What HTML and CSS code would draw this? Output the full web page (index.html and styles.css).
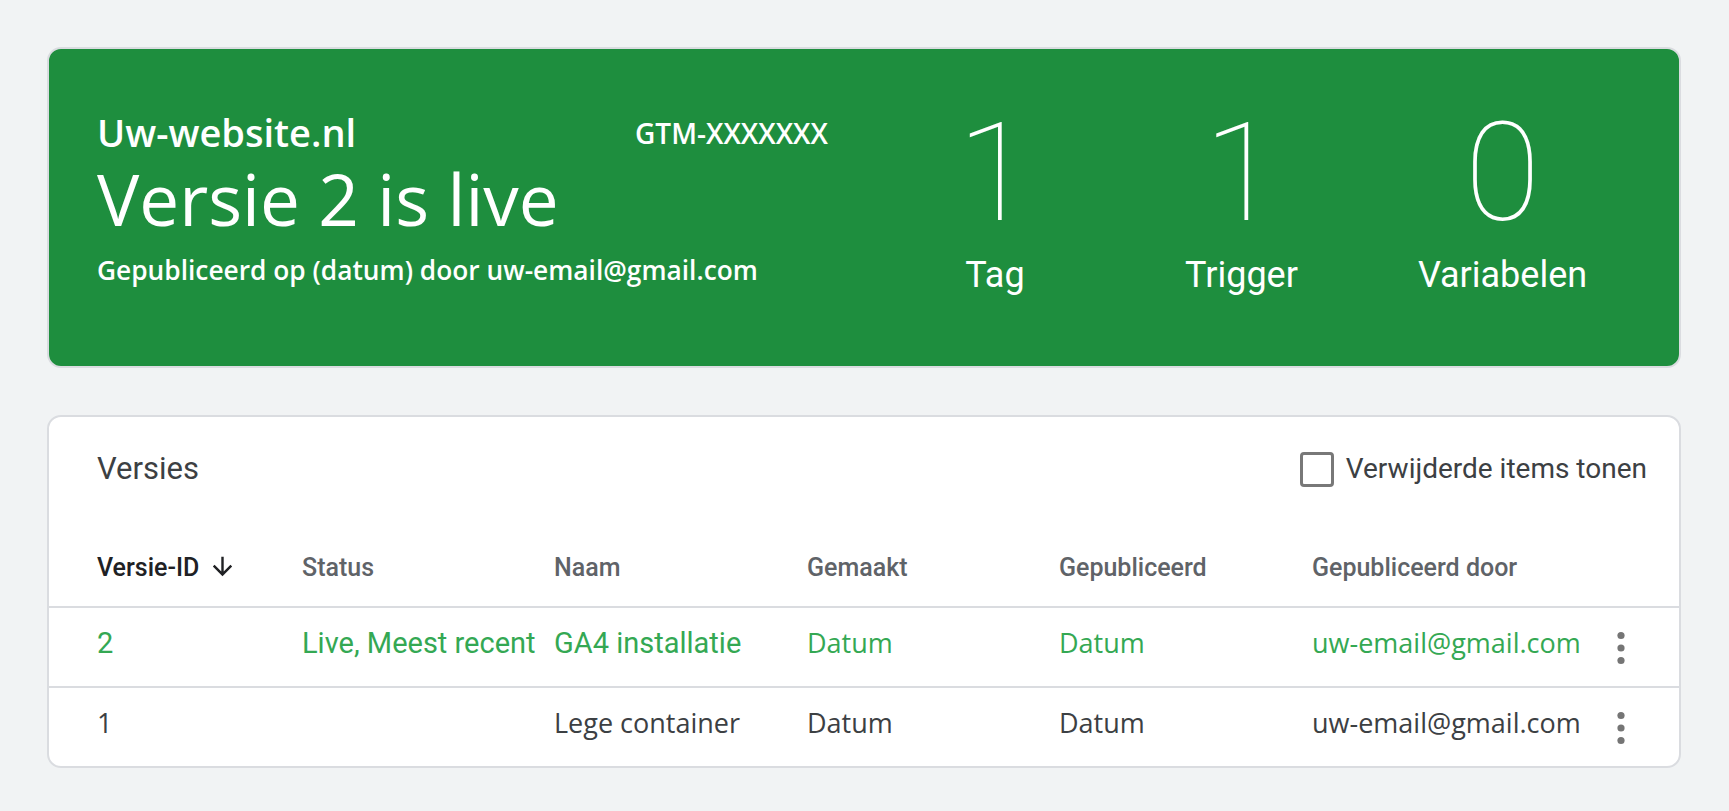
FILE: index.html
```html
<!DOCTYPE html>
<html lang="nl">
<head>
<meta charset="utf-8">
<title>Versies</title>
<link rel="stylesheet" href="styles.css">
</head>
<body>
<main class="page">
  <section class="hero">
    <div class="hero-info">
      <div class="hero-top">
        <span class="site">Uw-website.nl</span>
        <span class="gtm">GTM-XXXXXXX</span>
      </div>
      <h1 class="hero-title">Versie 2 is live</h1>
      <p class="hero-sub">Gepubliceerd op (datum) door uw-email@gmail.com</p>
    </div>
    <div class="stats">
      <div class="stat stat-tag"><div class="stat-num">1</div><div class="stat-label">Tag</div></div>
      <div class="stat stat-trigger"><div class="stat-num">1</div><div class="stat-label">Trigger</div></div>
      <div class="stat stat-var"><div class="stat-num">0</div><div class="stat-label">Variabelen</div></div>
    </div>
  </section>

  <section class="versions">
    <div class="versions-head">
      <h2 class="versions-title">Versies</h2>
      <label class="toggle"><span class="box"></span>Verwijderde items tonen</label>
    </div>
    <div class="vt-row vt-header">
      <div class="sorted">Versie-ID
        <svg class="sort-icon" viewBox="0 0 24 24" width="29" height="29"><path d="M20 12l-1.41-1.41L13 16.17V4h-2v12.17l-5.58-5.59L4 12l8 8 8-8z" fill="#202124"/></svg>
      </div>
      <div>Status</div>
      <div>Naam</div>
      <div>Gemaakt</div>
      <div>Gepubliceerd</div>
      <div>Gepubliceerd door</div>
      <div></div>
    </div>
    <div class="vt-row vt-body vt-live">
      <div class="rb">2</div>
      <div class="rb">Live, Meest recent</div>
      <div class="rb">GA4 installatie</div>
      <div>Datum</div>
      <div>Datum</div>
      <div>uw-email@gmail.com</div>
      <div class="kebab"><svg viewBox="0 0 20 50" width="20" height="50"><circle cx="10" cy="12.5" r="3.6"/><circle cx="10" cy="25" r="3.6"/><circle cx="10" cy="37.5" r="3.6"/></svg></div>
    </div>
    <div class="vt-row vt-body">
      <div>1</div>
      <div></div>
      <div>Lege container</div>
      <div>Datum</div>
      <div>Datum</div>
      <div>uw-email@gmail.com</div>
      <div class="kebab"><svg viewBox="0 0 20 50" width="20" height="50"><circle cx="10" cy="12.5" r="3.6"/><circle cx="10" cy="25" r="3.6"/><circle cx="10" cy="37.5" r="3.6"/></svg></div>
    </div>
  </section>
</main>
</body>
</html>
```

FILE: styles.css
```css
body {
  margin: 0;
  background: #f1f3f4;
}

.page {
  padding: 47px 48px 40px 47px;
}

/* Hero card */
.hero {
  display: flex;
  align-items: flex-start;
  box-sizing: border-box;
  height: 321px;
  background: #1e8e3e;
  border: 2px solid #dadce0;
  border-radius: 14px;
  color: #ffffff;
}

.hero-info {
  padding: 59px 0 0 48px;
  font-family: "Open Sans", "Liberation Sans", sans-serif;
}

.hero-top {
  display: flex;
  align-items: flex-start;
}

.site {
  width: 538px;
  font-size: 38px;
  line-height: 48px;
  font-weight: 600;
}

.gtm {
  margin-top: 5px;
  font-size: 28px;
  line-height: 40px;
  font-weight: 600;
}

.hero-title {
  margin: 3px 0 0;
  font-size: 71px;
  line-height: 80px;
  font-weight: 400;
}

.hero-sub {
  margin: 15px 0 0;
  font-size: 26.3px;
  line-height: 32px;
  font-weight: 600;
}

.stats {
  display: flex;
  gap: 106px;
  margin-left: auto;
  margin-top: 54px;
  padding-right: 92px;
  font-family: Roboto, "Liberation Sans", sans-serif;
  text-align: center;
}

.stat {
  flex: none;
  display: flex;
  flex-direction: column;
  align-items: center;
}

.stat-tag { width: 140px; }
.stat-trigger { width: 141px; }
.stat-var { width: 169px; }

.stat-num {
  font-size: 138px;
  line-height: 140px;
  font-weight: 100;
}

.stat-label {
  margin-top: 10px;
  font-size: 36px;
  line-height: 44px;
  font-weight: 400;
  white-space: nowrap;
}

/* Versions card */
.versions {
  margin-top: 47px;
  background: #ffffff;
  border: 2px solid #dadce0;
  border-radius: 14px;
  overflow: hidden;
}

.versions-head {
  display: flex;
  align-items: center;
  justify-content: space-between;
  height: 40px;
  padding: 32px 32px 0 48px;
}

.versions-title {
  margin: 0;
  font-family: Roboto, "Liberation Sans", sans-serif;
  font-size: 31px;
  line-height: 40px;
  font-weight: 400;
  color: #3c4043;
}

.toggle {
  display: flex;
  align-items: center;
  gap: 12px;
  font-family: Roboto, "Liberation Sans", sans-serif;
  font-size: 28px;
  line-height: 36px;
  color: #3c4043;
}

.box {
  width: 34px;
  height: 35px;
  box-sizing: border-box;
  border: 3px solid #787878;
  border-radius: 4px;
}

.vt-row {
  display: grid;
  grid-template-columns: 205px 252px 253px 252px 253px 1fr 50px;
  padding: 0 33px 0 48px;
  border-bottom: 2px solid #dadce0;
  white-space: nowrap;
}

.vt-header {
  padding-top: 63px;
  padding-bottom: 22px;
  font-family: Roboto, "Liberation Sans", sans-serif;
  font-size: 25px;
  line-height: 32px;
  font-weight: 500;
  color: #5f6368;
}

.sorted {
  display: flex;
  align-items: flex-start;
  gap: 9px;
  color: #202124;
}

.sort-icon {
  margin-top: 0;
  flex: none;
}

.vt-body {
  box-sizing: border-box;
  height: 80px;
  padding-top: 18px;
  align-items: start;
  font-family: "Open Sans", "Liberation Sans", sans-serif;
  font-size: 27px;
  line-height: 34px;
  color: #3c4043;
}

.vt-body:last-child {
  border-bottom: 0;
  height: 78px;
}

.vt-live {
  color: #34a853;
}

.rb {
  font-family: Roboto, "Liberation Sans", sans-serif;
  font-size: 29px;
}

.kebab {
  display: flex;
  justify-content: center;
  margin-top: -3px;
}

.kebab svg {
  fill: #757575;
}
```
